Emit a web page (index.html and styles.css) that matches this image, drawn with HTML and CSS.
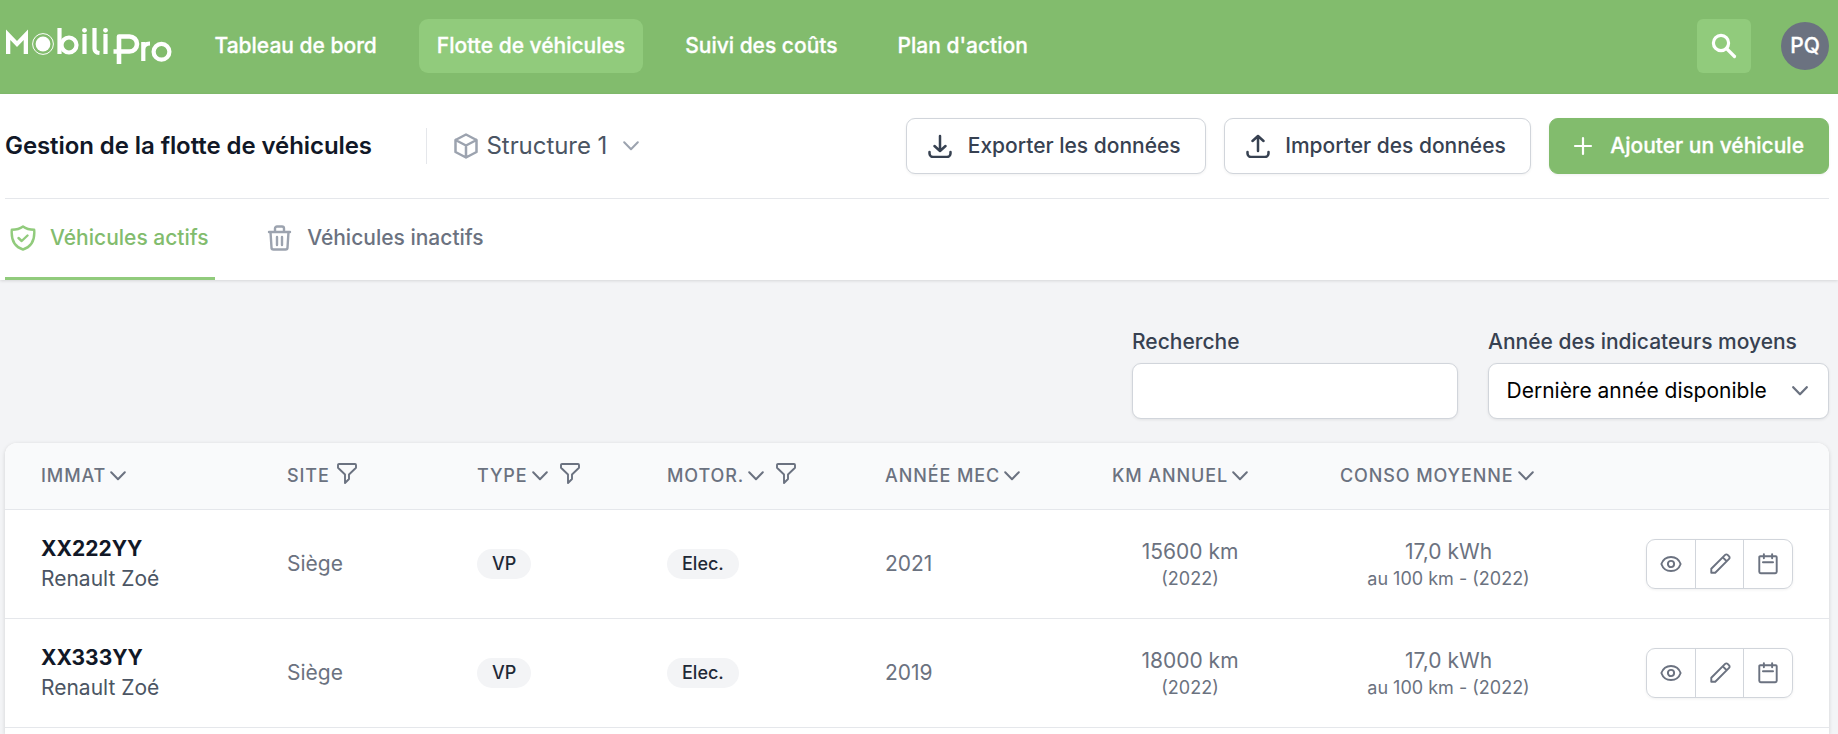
FILE: index.html
```
<!DOCTYPE html>
<html lang="fr">
<head>
<meta charset="utf-8">
<title>MobiliPro</title>
<link rel="stylesheet" href="styles.css">
</head>
<body>
<svg class="defs" aria-hidden="true">
  <symbol id="chev" viewBox="0 0 16 10"><path d="M1.2 1.2 8 8.2l6.8-7"/></symbol>
  <symbol id="funnel" viewBox="0 0 20 21"><path d="M2 1h16a1 1 0 0 1 1 1v2.700L12 11.500v4.500L8 20v-8.500L1 4.700V2a1 1 0 0 1 1-1z"/></symbol>
  <symbol id="eye" viewBox="0 0 24 24"><path d="M1.500 12c1.700-4.800 5.700-7.700 10.500-7.700s8.800 2.900 10.500 7.700c-1.700 4.800-5.700 7.700-10.500 7.700S3.200 16.800 1.500 12z"/><circle cx="12" cy="12" r="3.400"/></symbol>
  <symbol id="pencil" viewBox="0 0 24 24"><path d="M2.500 21.500v-4.300L17.600 2.100a1.900 1.900 0 0 1 2.700 0l1.600 1.600a1.900 1.900 0 0 1 0 2.700L6.800 21.500zM15 4.700 19.300 9"/></symbol>
  <symbol id="cal" viewBox="0 0 24 24"><path d="M7.500 1.200v4.600M16.500 1.200v4.600M6.500 10h11M3.500 3.500h17a1 1 0 0 1 1 1v16a1.500 1.500 0 0 1-1.500 1.500H4a1.500 1.500 0 0 1-1.500-1.500v-16a1 1 0 0 1 1-1z"/></symbol>
</svg>

<header class="topbar">
  <svg class="logo" viewBox="0 0 168 40" role="img" aria-label="MobiliPro">
    <g fill="none" stroke="#fff" stroke-width="4.200">
      <circle cx="38" cy="17" r="10.400" stroke-width="1"/>
      <path d="M54.500 1v26"/><circle cx="64" cy="18" r="7.500"/>
      <path d="M79.500 7v20M89.500 1v20.500q0 4 5 4.500M100.500 7v20"/>
      <path d="M114 37V9.500h10.500a7.500 7.500 0 0 1 0 15H108.500" stroke-width="4.600"/>
      <path d="M138.300 34V15M138.300 22q.5-5.500 6.700-5.500"/>
      <circle cx="156.500" cy="24.800" r="7.900"/>
    </g>
    <g fill="#fff" stroke="none"><path d="M1 27V2.500l11 11.500L23 2.500V27h-4.300V13L12 20 5.300 13v14z"/><circle cx="38" cy="17" r="7.400"/><circle cx="79.500" cy="3.300" r="2.400"/><circle cx="100.500" cy="3.300" r="2.400"/></g>
  </svg>
  <nav class="nav">
    <a>Tableau de bord</a><a class="current">Flotte de véhicules</a><a>Suivi des coûts</a><a>Plan d'action</a>
  </nav>
  <div class="search"><svg width="28" height="28" viewBox="0 0 28 28" fill="none" stroke="#fff" stroke-width="3.200" stroke-linecap="round"><circle cx="11" cy="11" r="7.600"/><path d="m16.500 16.500 8 8"/></svg></div>
  <div class="avatar">PQ</div>
</header>

<section class="head">
  <div class="titlebar">
    <h1>Gestion de la flotte de véhicules</h1>
    <div class="structure">
      <svg class="cube" viewBox="0 0 24 26"><path d="M12 1.500 22.500 7v12L12 24.500 1.500 19V7zM1.500 7 12 12.500 22.500 7M12 12.500v12"/></svg>
      <span>Structure 1</span>
      <svg class="chev"><use href="#chev"/></svg>
    </div>
    <div class="actions">
      <button class="btn export"><svg viewBox="0 0 24 24"><path d="M12 2v15M6.500 12l5.500 5 5.500-5M1.500 18v1.500A3.500 3.500 0 0 0 5 23h14a3.500 3.500 0 0 0 3.500-3.500V18"/></svg>Exporter les données</button>
      <button class="btn import"><svg viewBox="0 0 24 24"><path d="M12 17V2M6.500 7 12 2l5.500 5M1.500 18v1.500A3.500 3.500 0 0 0 5 23h14a3.500 3.500 0 0 0 3.500-3.500V18"/></svg>Importer des données</button>
      <button class="btn primary"><svg viewBox="0 0 24 24"><path d="M12 4v16M4 12h16"/></svg>Ajouter un véhicule</button>
    </div>
  </div>
  <div class="tabs">
    <a class="tab active"><svg width="26" height="26" viewBox="0 0 26 26"><path d="M13 1.500C10 3.800 6 4.800 1.800 4.800 1 14.500 3.500 21.500 13 24.500c9.500-3 12-10 11.200-19.700C20 4.800 16 3.800 13 1.500zM8.500 13l3.200 3 5.800-5.500"/></svg>Véhicules actifs</a>
    <a class="tab"><svg width="26" height="26" viewBox="0 0 26 26"><path d="M2 7h21M8 6.500v-3a2 2 0 0 1 2-2h5a2 2 0 0 1 2 2v3M3.500 7l1 15.500a2 2 0 0 0 2 2h12a2 2 0 0 0 2-2l1-15.500M10 12v8M15 12v8"/></svg>Véhicules inactifs</a>
  </div>
</section>

<main>
  <div class="filters">
    <label class="field search-field">Recherche<input type="text"></label>
    <div class="field year-field">Année des indicateurs moyens<div class="select">Dernière année disponible<svg class="chev"><use href="#chev"/></svg></div></div>
  </div>
  <div class="card">
    <div class="row thead">
      <div>IMMAT<svg class="chev"><use href="#chev"/></svg></div>
      <div>SITE<svg class="funnel"><use href="#funnel"/></svg></div>
      <div>TYPE<svg class="chev"><use href="#chev"/></svg><svg class="funnel"><use href="#funnel"/></svg></div>
      <div>MOTOR.<svg class="chev"><use href="#chev"/></svg><svg class="funnel"><use href="#funnel"/></svg></div>
      <div>ANNÉE MEC<svg class="chev"><use href="#chev"/></svg></div>
      <div>KM ANNUEL<svg class="chev"><use href="#chev"/></svg></div>
      <div>CONSO MOYENNE<svg class="chev"><use href="#chev"/></svg></div>
      <div></div>
    </div>
    <div class="row">
      <div class="vehicle"><b>XX222YY</b><span>Renault Zoé</span></div>
      <div>Siège</div>
      <div><span class="pill">VP</span></div>
      <div><span class="pill">Elec.</span></div>
      <div>2021</div>
      <div class="metric"><span>15600 km</span><small>(2022)</small></div>
      <div class="metric"><span>17,0 kWh</span><small>au 100 km - (2022)</small></div>
      <div class="tools"><div class="group"><i><svg><use href="#eye"/></svg></i><i><svg><use href="#pencil"/></svg></i><i><svg><use href="#cal"/></svg></i></div></div>
    </div>
    <div class="row">
      <div class="vehicle"><b>XX333YY</b><span>Renault Zoé</span></div>
      <div>Siège</div>
      <div><span class="pill">VP</span></div>
      <div><span class="pill">Elec.</span></div>
      <div>2019</div>
      <div class="metric"><span>18000 km</span><small>(2022)</small></div>
      <div class="metric"><span>17,0 kWh</span><small>au 100 km - (2022)</small></div>
      <div class="tools"><div class="group"><i><svg><use href="#eye"/></svg></i><i><svg><use href="#pencil"/></svg></i><i><svg><use href="#cal"/></svg></i></div></div>
    </div>
  </div>
</main>
</body>
</html>
```

FILE: styles.css
```
* { box-sizing: border-box; }
body { margin: 0; height: 734px; overflow: hidden; display: flex; flex-direction: column; background: #f3f4f6; font: 400 21px/30px Inter, "Liberation Sans", sans-serif; color: #6b7280; }
.defs { display: none; }
svg { flex: none; fill: none; stroke: currentColor; stroke-linecap: round; stroke-linejoin: round; }

.topbar { flex: none; height: 94px; padding: 19px 9px 0 5px; background: #82bc6d; display: flex; align-items: flex-start; color: #fff; }
.logo { width: 168px; height: 40px; margin-top: 8px; overflow: visible; stroke-linecap: butt; }
.nav { display: flex; gap: 24px; margin-left: 23.5px; font-weight: 500; -webkit-text-stroke: .3px #fff; }
.nav a { padding: 12px 18px; border-radius: 9px; white-space: nowrap; }
.nav .current { background: #91cb7c; }
.search { width: 54px; height: 54px; margin-left: auto; background: #91cb7c; border-radius: 6px; display: flex; align-items: center; justify-content: center; }
.avatar { width: 48px; height: 48px; margin: 3px 0 0 30px; border-radius: 50%; background: #6b7280; display: flex; align-items: center; justify-content: center; font-weight: 500; -webkit-text-stroke: .3px #fff; }

.head { flex: none; height: 186px; padding: 0 9px 0 5px; background: #fff; box-shadow: 0 1px 3px rgba(0,0,0,.12); }
.titlebar { height: 105px; border-bottom: 1px solid #e5e7eb; display: flex; align-items: center; }
h1 { margin: 0; width: 421px; font-size: 24px; line-height: 36px; font-weight: 600; letter-spacing: -.08px; color: #111827; }
.structure { height: 36px; border-left: 1px solid #e5e7eb; padding-left: 27px; display: flex; align-items: center; font-size: 24px; letter-spacing: -.06px; color: #4b5563; }
.cube { width: 24px; height: 26px; margin-right: 8.5px; color: #9ca3af; stroke-width: 2.5; }
.chev { width: 16px; height: 10px; stroke-width: 2; }
.structure .chev { margin-left: 15.5px; color: #9ca3af; }
.actions { margin-left: auto; display: flex; gap: 18px; }
.btn { height: 56px; padding: 0 24px 0 21px; border: 1px solid #d1d5db; border-radius: 9px; background: #fff; color: #374151; font: 500 21px/30px Inter, sans-serif; display: flex; align-items: center; white-space: nowrap; box-shadow: 0 1px 3px rgba(0,0,0,.06); }
.btn svg { width: 24px; height: 24px; margin-right: 15.5px; stroke-width: 2.5; }
.btn.primary { background: #82bc6d; border-color: #82bc6d; color: #fff; -webkit-text-stroke: .3px #fff; }
.btn.primary svg { stroke-width: 2.2; }
.tabs { height: 81px; display: flex; gap: 47.5px; font-weight: 500; }
.tab { height: 81px; padding: 0 6px 0 5px; display: flex; align-items: center; border-bottom: 3px solid transparent; }
.tab svg { margin-right: 14px; color: #9ca3af; stroke-width: 2.4; }
.tab.active { color: #82bc6d; border-color: #91cb7c; }
.tab.active svg { color: #91cb7c; }

main { flex: 1; min-height: 0; display: flex; flex-direction: column; overflow: hidden; padding: 47px 9px 0 5px; }
.filters { flex: none; display: flex; justify-content: flex-end; gap: 30px; margin-bottom: 24px; }
.field { display: block; color: #374151; font-weight: 500; }
.search-field { width: 326px; }
.year-field { width: 341px; }
input, .select { display: flex; width: 100%; height: 56px; margin-top: 6px; border: 1px solid #d1d5db; border-radius: 9px; background: #fff; box-shadow: 0 1px 3px rgba(0,0,0,.08); }
.select { align-items: center; justify-content: space-between; padding: 0 20px 0 17.5px; color: #000; font-weight: 400; white-space: nowrap; }
.select .chev { color: #6b7280; stroke-width: 2.3; }

.card { flex: 1; border-radius: 12px 12px 0 0; overflow: hidden; background: #fff; box-shadow: 0 1px 4px rgba(0,0,0,.14); }
.row { display: grid; grid-template-columns: 246px 190px 190px 218px 227px 228px 289px 236px; height: 109px; border-bottom: 1px solid #e5e7eb; }
.row > div { padding: 0 36px; display: flex; align-items: center; white-space: nowrap; }
.row.thead { height: 67px; background: #f9fafb; font-size: 18px; font-weight: 500; letter-spacing: .9px; }
.thead .chev { margin-left: 4px; }
.funnel { width: 20px; height: 21px; margin: -6px 0 0 7px; stroke-width: 1.9; }
.chev + .funnel { margin-left: 12px; }
.row > .vehicle { flex-direction: column; align-items: flex-start; justify-content: center; }
.vehicle b { color: #111827; font-weight: 700; }
.vehicle span { color: #4b5563; }
.pill { height: 30px; padding: 0 15px; border-radius: 15px; background: #f3f4f6; color: #1f2937; font-size: 18px; font-weight: 500; }
.row > .metric { flex-direction: column; justify-content: center; padding-top: 2px; }
.metric span { line-height: 28px; }
small { font-size: 18px; line-height: 26px; }
.row > .tools { justify-content: flex-end; }
.group { display: flex; width: 147px; height: 50px; border: 1px solid #d1d5db; border-radius: 9px; box-shadow: 0 1px 3px rgba(0,0,0,.06); }
.group i { flex: 1; display: flex; align-items: center; justify-content: center; }
.group i + i { border-left: 1px solid #d1d5db; }
.group svg { width: 22px; height: 22px; stroke-width: 2.1; }
```
